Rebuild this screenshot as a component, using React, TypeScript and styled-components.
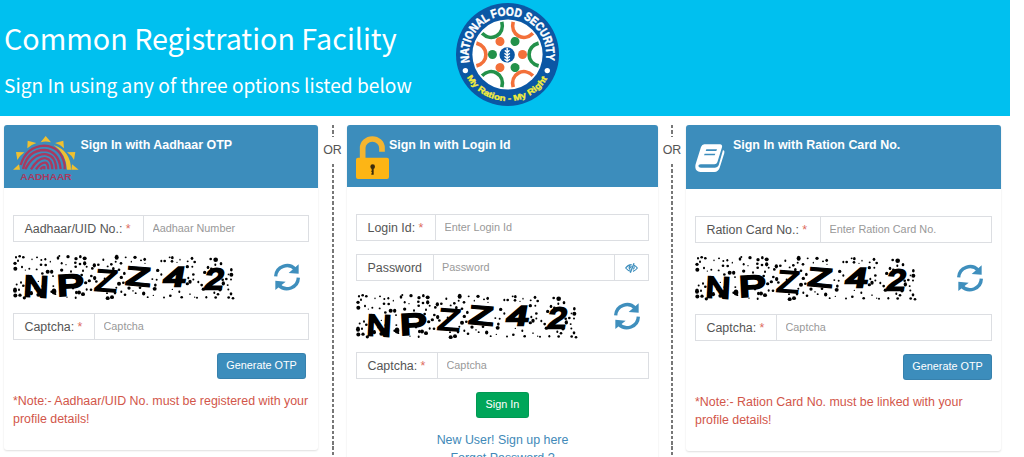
import React from 'react';
import styled, { createGlobalStyle } from 'styled-components';

const GlobalStyle = createGlobalStyle`
  * { box-sizing: border-box; }
  html, body { margin: 0; padding: 0; background: #fff; overflow: hidden; }
  body { font-family: "Liberation Sans", Arial, sans-serif; font-size: 12.42px; color: #555; }
`;

const Page = styled.div`
  width: 1024px;
  height: 457px;
  overflow: hidden;
  background: #fff;
`;

const Banner = styled.header`
  display: flex;
  width: 1010px;
  height: 115.5px;
  padding-left: 4px;
  background: #00c0ef;
  color: #fff;
  font-family: "Noto Sans CJK SC", sans-serif;
`;

const BannerText = styled.div`
  width: 452px;
  padding-top: 16px;
  white-space: nowrap;
`;

const Title = styled.h1`
  margin: 0;
  font-size: 28.7px;
  line-height: 44px;
  font-weight: 400;
`;

const Subtitle = styled.p`
  margin: 10px 0 0;
  font-size: 19.15px;
  line-height: 31px;
`;

const Emblem = styled.svg`
  display: block;
  width: 103px;
  height: 103px;
  margin-top: 3px;
`;

const Columns = styled.main`
  display: grid;
  grid-template-columns: 314px 29px 311px 28px 315px;
  align-items: start;
  padding: 9.5px 0 0 4px;
`;

const Panel = styled.section<{ $height: number }>`
  height: ${p => p.$height}px;
  border-radius: 3px;
  box-shadow: 0 1px 2px rgba(0, 0, 0, 0.13);
`;

const PanelHead = styled.div<{ $height: number; $icon: number }>`
  display: grid;
  grid-template-columns: ${p => p.$icon}px 1fr;
  height: ${p => p.$height}px;
  padding: 11px 9px 0;
  border-radius: 3px 3px 0 0;
  background: #3c8dbc;
`;

const PanelTitle = styled.h2`
  margin: 0;
  font-size: 12.45px;
  line-height: 18px;
  font-weight: 700;
  color: #fff;
  white-space: nowrap;
`;

const Icon = styled.svg<{ $w: number; $h: number; $top?: number; $left?: number }>`
  display: block;
  width: ${p => p.$w}px;
  height: ${p => p.$h}px;
  margin: ${p => p.$top ?? 0}px 0 0 ${p => p.$left ?? 0}px;
  overflow: visible;
`;

const PanelBody = styled.div<{ $top: number }>`
  display: flex;
  flex-direction: column;
  gap: 13px;
  padding: ${p => p.$top}px 9px 0;
`;

const Field = styled.div`
  display: flex;
  height: 27px;
  border: 1px solid #dcdee2;
`;

const FieldLabel = styled.label<{ $width: number }>`
  width: ${p => p.$width}px;
  padding-left: 10.5px;
  border-right: 1px solid #dcdee2;
  line-height: 26px;
  white-space: nowrap;
`;

const Star = styled.span`
  color: #dd6b5d;
`;

const Input = styled.input`
  flex: 1;
  min-width: 0;
  padding: 0 8px 1px 8.5px;
  border: 0;
  outline: 0;
  background: transparent;
  font: 10.85px "Liberation Sans", Arial, sans-serif;
  color: #555;
  &::placeholder { color: #999; opacity: 1; }
`;

const Addon = styled.span`
  display: flex;
  align-items: center;
  justify-content: center;
  width: 34.5px;
  border-left: 1px solid #dcdee2;
`;

const CaptchaRow = styled.div<{ $right: number }>`
  display: flex;
  align-items: center;
  justify-content: space-between;
  height: 44.5px;
  padding-right: ${p => p.$right}px;
`;

const Button = styled.button<{ $color: string; $align: string; $inset?: number }>`
  align-self: ${p => p.$align};
  height: 26.5px;
  margin-right: ${p => p.$inset ?? 0}px;
  padding: 0 8.2px 1px;
  border: 1px solid rgba(0, 0, 0, 0.08);
  border-radius: 3px;
  background: ${p => p.$color};
  color: #fff;
  font: 10.85px "Liberation Sans", Arial, sans-serif;
`;

const Note = styled.p`
  margin: 0;
  line-height: 18px;
  color: #d2564a;
`;

const Links = styled.div`
  display: flex;
  flex-direction: column;
  align-items: center;
  line-height: 18px;
  color: #4189b8;
`;

const Divider = styled.div`
  display: flex;
  flex-direction: column;
  align-items: center;
  height: 340px;
`;

const Dashes = styled.span<{ $height?: number }>`
  flex: ${p => (p.$height ? 'none' : 1)};
  width: 2px;
  height: ${p => p.$height ?? 0}px;
  background: repeating-linear-gradient(#777 0 3.4px, #fff 3.4px 5.33px);
`;

const Or = styled.span`
  height: 27px;
  line-height: 26px;
  color: #555;
`;

const ORANGE = '#f3703a';
const GREEN = '#23914a';

const FoodSecurityEmblem = () => (
  <Emblem viewBox="49 10 308 308">
    <defs>
      <path id="ringTop" d="M90 190 A116 116 0 1 1 316 190" />
      <path id="ringBottom" d="M76 221 A139 139 0 0 0 330 221" />
    </defs>
    <circle cx="203" cy="164" r="154" fill="#0b57a4" />
    <circle cx="203" cy="164" r="105" fill="#fff" />
    {[0, 60, 120, 180, 240, 300].map((a, i) => (
      <g key={a} transform={`rotate(${a} 203 164)`}>
        <path d="M110 130 C148 140 148 188 110 198" fill="none" stroke={i % 2 ? GREEN : ORANGE} strokeWidth="11" />
        <circle cx="158" cy="164" r="13.5" fill={i % 2 ? ORANGE : GREEN} />
      </g>
    ))}
    <circle cx="202" cy="165" r="23" fill="#0b57a4" />
    <path d="M202 144v42M202 158l-7-7M202 158l7-7M202 167l-8-7M202 167l8-7M202 176l-8-7M202 176l8-7M202 184l-8-6M202 184l8-6" stroke="#fff" strokeWidth="4" />
    <g fontFamily="Liberation Sans" fontWeight="700">
      <text fontSize="36" fill="#fff" stroke="#fff" strokeWidth="1.500">
        <textPath href="#ringTop" startOffset="2" textLength="406" lengthAdjust="spacingAndGlyphs">NATIONAL FOOD SECURITY</textPath>
      </text>
      <text fontSize="25" fill="#f5ee3a" stroke="#f5ee3a" strokeWidth="1">
        <textPath href="#ringBottom" startOffset="13" textLength="290" lengthAdjust="spacingAndGlyphs">My Ration - My Right</textPath>
      </text>
    </g>
    <circle cx="77" cy="212" r="8" fill="#fff" />
    <circle cx="322" cy="212" r="8" fill="#fff" />
  </Emblem>
);

const AadhaarIcon = () => (
  <Icon $w={66} $h={45} viewBox="43 61 198 135">
    <g fill="#f0c02f">
      <path d="M126 80L141 61L157 80Q141 75 126 80Z" />
      <path d="M86 98L87 75L113 82Q97 87 86 98Z" />
      <path d="M56 133L52 109L77 110Q63 120 56 133Z" />
      <path d="M43 162L61 146L64 162Z" />
      <path d="M169 82L194 75L196 98Q185 86 169 82Z" />
      <path d="M205 110L230 109L226 133Q219 119 205 110Z" />
      <path d="M220 146L240 162L218 162Z" />
      <path d="M165 88Q217 106 217 162H205Q203 115 165 88Z" />
    </g>
    <g fill="none" stroke="#a83a60" strokeWidth="7">
      <path d="M66 148Q83 93 137 90Q188 93 198 148V161" />
      <path d="M73 160Q87 103 138 103Q180 107 186 160" />
      <path d="M80 161Q106 111 144 116Q171 121 173 161" />
      <path d="M97 161Q120 124 142 128Q160 132 161 161" />
      <path d="M112 161Q128 138 141 141Q149 145 149 161" />
      <path d="M125 161Q132 152 137 154V161" />
    </g>
    <text x="65" y="193" fontFamily="Liberation Sans" fontWeight="700" fontSize="28" fill="#a83a60" textLength="154" lengthAdjust="spacingAndGlyphs">AADHAAR</text>
  </Icon>
);

const LockIcon = () => (
  <Icon $w={33} $h={43} viewBox="107 62 99 129">
    <path d="M127 132V98a29 27 0 0 1 58 0V109" fill="none" stroke="#f4b530" strokeWidth="17" />
    <rect x="107" y="127" width="99" height="64" rx="6" fill="#fdb515" />
    <circle cx="157" cy="154" r="7" fill="#3d2c0c" />
    <path d="M154 156h6v22h-7v-4h2v-3h-2v-4h1z" fill="#3d2c0c" />
  </Icon>
);

const BookIcon = () => (
  <Icon $w={30} $h={28} $top={8} viewBox="135 86 90 84">
    <path
      fill="#fff"
      fillRule="evenodd"
      d="M163 87H210Q218 88 216 96L202 141Q200 147 193 147H152Q145 148 145 152Q146 157 153 157H195Q203 157 206 150L219 104Q225 106 223 113L209 157Q205 169 193 170H151Q137 169 136 156Q135 150 138 143L153 95Q156 87 163 87ZM169 102L167 107H199L201 102ZM164 115L162 120H194L196 115Z"
    />
  </Icon>
);

const RefreshIcon = () => (
  <Icon $w={26} $h={26} viewBox="824 193 78 78">
    <g fill="none" stroke="#3f8fbd" strokeWidth="10">
      <path d="M829 230A34 34 0 0 1 888 209" />
      <path d="M897 234A34 34 0 0 1 838 256" />
    </g>
    <path d="M898 194V222L868 220Z M828 271V243L859 246Z" fill="#3f8fbd" />
  </Icon>
);

const EyeOffIcon = () => (
  <Icon $w={13} $h={10} viewBox="0 0 39 30" fill="none" stroke="#3c8dbc" strokeWidth="3.500">
    <path d="M18 25Q8 23 2 15Q8 6 20 5M27 7Q33 10 37 15Q32 22 24 25" />
    <path d="M14 9Q10 15 16 20M20 10Q16 11 17 15M27 10Q29 15 25 19" />
    <path d="M27 1L16 29" strokeWidth="4" />
  </Icon>
);

// Specks of the captcha background: x, y, radius.
const SPECKS: number[][] = [
  [34, 24, 3], [45, 21, 4], [56, 24, 4], [40, 34, 3], [31, 42, 5], [32, 58, 6], [52, 53, 3], [62, 62, 2], [74, 58, 3],
  [82, 30, 2], [97, 24, 3], [110, 32, 3], [122, 30, 3], [109, 46, 4], [123, 47, 4], [137, 37, 2], [96, 60, 3], [129, 67, 6],
  [141, 67, 5], [113, 72, 4], [145, 80, 3], [160, 26, 4], [164, 20, 3], [190, 22, 5], [171, 42, 3], [184, 46, 2], [171, 62, 5],
  [199, 66, 3], [214, 28, 5], [212, 40, 4], [227, 22, 4], [240, 27, 6], [226, 44, 4], [240, 42, 5], [213, 52, 4], [246, 52, 3],
  [235, 64, 3], [231, 77, 4], [260, 80, 4], [269, 48, 5], [263, 57, 4], [281, 46, 4], [296, 31, 3], [309, 51, 3], [320, 45, 4],
  [336, 24, 6], [333, 37, 3], [349, 42, 4], [326, 58, 4], [343, 61, 4], [363, 24, 3], [380, 37, 2], [391, 24, 5], [409, 33, 3],
  [420, 30, 4], [421, 42, 2], [350, 84, 5], [359, 72, 4], [343, 103, 6], [356, 100, 4], [300, 88, 3], [275, 96, 4], [254, 94, 5],
  [31, 122, 6], [32, 138, 6], [46, 137, 5], [43, 121, 3], [36, 105, 3], [56, 109, 4], [49, 99, 3], [59, 145, 5], [66, 127, 3],
  [80, 131, 5], [92, 117, 3], [101, 136, 6], [86, 98, 3], [101, 96, 2], [113, 110, 3], [111, 128, 5], [141, 127, 4], [146, 110, 3],
  [148, 126, 7], [152, 134, 3], [205, 116, 4], [215, 129, 4], [223, 129, 6], [235, 134, 6], [246, 120, 3], [243, 100, 5],
  [259, 121, 4], [270, 86, 5], [309, 146, 6], [322, 143, 6], [331, 130, 4], [335, 115, 3], [307, 131, 3], [350, 127, 3],
  [361, 136, 4], [373, 116, 5], [385, 124, 2], [393, 131, 3], [406, 115, 4], [417, 132, 5], [429, 143, 3], [450, 118, 6],
  [452, 107, 4], [443, 89, 3], [459, 63, 5], [470, 75, 3], [456, 91, 3], [446, 138, 2], [470, 35, 3], [480, 35, 4], [495, 24, 3],
  [503, 25, 4], [502, 36, 4], [517, 39, 2], [526, 31, 2], [549, 36, 3], [548, 52, 5], [562, 27, 4], [570, 38, 4], [563, 52, 3],
  [551, 86, 3], [566, 75, 4], [566, 90, 3], [556, 97, 5], [548, 103, 5], [600, 69, 5], [610, 54, 4], [618, 29, 4], [633, 31, 7],
  [649, 43, 4], [620, 58, 4], [647, 62, 4], [632, 46, 3], [596, 119, 5], [591, 107, 4], [581, 98, 3], [654, 91, 4], [665, 89, 4],
  [656, 102, 5], [646, 121, 5], [669, 107, 3], [680, 61, 4], [680, 76, 6], [679, 90, 3], [671, 75, 2], [672, 144, 4], [685, 146, 4],
  [679, 133, 4], [671, 120, 3], [640, 134, 4], [629, 130, 3], [633, 144, 4], [531, 143, 4], [524, 127, 3], [497, 139, 4],
  [503, 120, 2], [556, 134, 2], [577, 145, 3], [570, 143, 2], [605, 143, 3], [478, 144, 3], [187, 143, 2], [213, 145, 3],
];

// Distorted captcha characters with their placement.
const GLYPHS = [
  { c: 'N', x: 57, y: 141, size: 88, w: 74, turn: 'rotate(3 90 110)', heavy: 1, bold: false, line: 7 },
  { c: 'P', x: 158, y: 137, size: 86, w: 80, turn: 'rotate(-3 190 110)', heavy: 1, bold: false, line: 8 },
  { c: 'Z', x: 262, y: 126, size: 92, w: 68, turn: 'translate(14 0) rotate(4 300 95) skewX(-3)', heavy: 0, bold: false, line: 5 },
  { c: 'Z', x: 362, y: 109, size: 82, w: 78, turn: 'rotate(5 400 80)', heavy: 4, bold: true, line: 3 },
  { c: '4', x: 480, y: 111, size: 80, w: 64, turn: 'translate(14 0) skewX(-10)', heavy: 2, bold: false, line: 8 },
  { c: '2', x: 598, y: 120, size: 86, w: 56, turn: 'translate(20 0) skewX(-10)', heavy: 2, bold: false, line: 8 },
];

const CaptchaImage = () => (
  <Icon $w={222} $h={44.5} viewBox="25 17 666 133" preserveAspectRatio="none">
    {SPECKS.map(([x, y, r], i) => (
      <ellipse key={i} cx={x} cy={y} rx={r} ry={r * (i % 3 === 0 ? 1.25 : 0.95)} />
    ))}
    {GLYPHS.map((g, i) => (
      <text
        key={i}
        x={g.x}
        y={g.y}
        transform={g.turn}
        fontFamily="Liberation Sans"
        fontWeight={g.bold ? 700 : 400}
        fontSize={g.size}
        textLength={g.w}
        lengthAdjust="spacingAndGlyphs"
        stroke="#000"
        strokeWidth={g.line}
      >
        {g.c}
      </text>
    ))}
  </Icon>
);

type FormFieldProps = { label: string; hint: string; width: number; required?: boolean; children?: React.ReactNode };

const FormField = ({ label, hint, width, required = true, children }: FormFieldProps) => (
  <Field>
    <FieldLabel $width={width}>
      {label}
      {required && <Star> *</Star>}
    </FieldLabel>
    <Input placeholder={hint} />
    {children}
  </Field>
);

const Captcha = ({ right }: { right: number }) => (
  <CaptchaRow $right={right}>
    <CaptchaImage />
    <RefreshIcon />
  </CaptchaRow>
);

const OrDivider = () => (
  <Divider>
    <Dashes $height={12} />
    <Or>OR</Or>
    <Dashes />
  </Divider>
);

export default function App() {
  return (
    <Page>
      <GlobalStyle />
      <Banner>
        <BannerText>
          <Title>Common Registration Facility</Title>
          <Subtitle>Sign In using any of three options listed below</Subtitle>
        </BannerText>
        <FoodSecurityEmblem />
      </Banner>
      <Columns>
        <Panel $height={325}>
          <PanelHead $height={63} $icon={67.500}>
            <AadhaarIcon />
            <PanelTitle>Sign In with Aadhaar OTP</PanelTitle>
          </PanelHead>
          <PanelBody $top={27}>
            <FormField label="Aadhaar/UID No.:" hint="Aadhaar Number" width={130} />
            <Captcha right={9} />
            <FormField label="Captcha:" hint="Captcha" width={81} />
            <Button $color="#3c8dbc" $align="flex-end" $inset={3}>Generate OTP</Button>
            <Note>*Note:- Aadhaar/UID No. must be registered with your profile details!</Note>
          </PanelBody>
        </Panel>
        <OrDivider />
        <Panel $height={345}>
          <PanelHead $height={62} $icon={33}>
            <LockIcon />
            <PanelTitle>Sign In with Login Id</PanelTitle>
          </PanelHead>
          <PanelBody $top={27}>
            <FormField label="Login Id:" hint="Enter Login Id" width={79} />
            <FormField label="Password" hint="Password" width={76.500} required={false}>
              <Addon><EyeOffIcon /></Addon>
            </FormField>
            <Captcha right={9} />
            <FormField label="Captcha:" hint="Captcha" width={81} />
            <Button $color="#00a65a" $align="center">Sign In</Button>
            <Links>
              <span>New User! Sign up here</span>
              <span>Forgot Password ?</span>
            </Links>
          </PanelBody>
        </Panel>
        <OrDivider />
        <Panel $height={326}>
          <PanelHead $height={64} $icon={38}>
            <BookIcon />
            <PanelTitle>Sign In with Ration Card No.</PanelTitle>
          </PanelHead>
          <PanelBody $top={27}>
            <FormField label="Ration Card No.:" hint="Enter Ration Card No." width={125} />
            <Captcha right={9} />
            <FormField label="Captcha:" hint="Captcha" width={81} />
            <Button $color="#3c8dbc" $align="flex-end">Generate OTP</Button>
            <Note>*Note:- Ration Card No. must be linked with your profile details!</Note>
          </PanelBody>
        </Panel>
      </Columns>
    </Page>
  );
}
